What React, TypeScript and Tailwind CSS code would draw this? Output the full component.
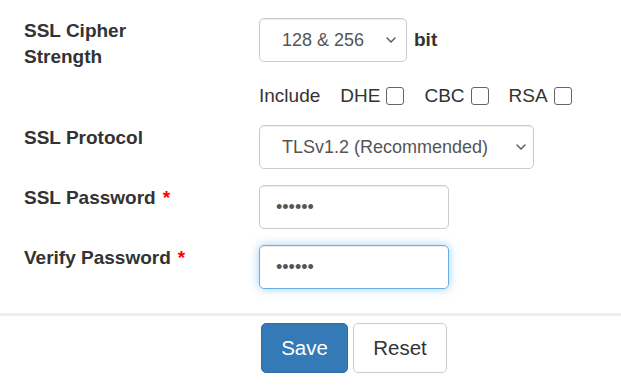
import { ChangeEvent, useState } from "react";

const font = "font-['Liberation_Sans',Arial,Helvetica,sans-serif]";

function Chevron({ className }: { className?: string }) {
  return (
    <svg
      viewBox="0 0 10 6"
      className={className}
      fill="none"
      stroke="#555"
      strokeWidth="1.4"
      strokeLinecap="round"
      strokeLinejoin="round"
    >
      <path d="M1 1l4 4 4-4" />
    </svg>
  );
}

interface SelectProps {
  value: string;
  options: string[];
  width: string;
  chevronRight: string;
  onChange: (v: string) => void;
}

function Select({ value, options, width, chevronRight, onChange }: SelectProps) {
  return (
    <div className={`relative h-[44px] ${width}`}>
      <select
        value={value}
        onChange={(e: ChangeEvent<HTMLSelectElement>) => onChange(e.target.value)}
        className={`h-full w-full appearance-none rounded-[5px] border border-[#cccccc] bg-white pl-[22px] text-[18px] text-[#555555] shadow-[inset_0_1px_1px_rgba(0,0,0,0.075)] outline-none ${font}`}
      >
        {options.map((o) => (
          <option key={o}>{o}</option>
        ))}
      </select>
      <Chevron
        className={`pointer-events-none absolute top-1/2 h-[6px] w-[10px] -translate-y-1/2 ${chevronRight}`}
      />
    </div>
  );
}

function Check({ label }: { label: string }) {
  return (
    <label className="flex items-center gap-[6px]">
      <span>{label}</span>
      <input
        type="checkbox"
        className="h-[18px] w-[18px] appearance-none rounded-[3px] border border-[#666666] bg-white"
      />
    </label>
  );
}

function Label({ text, required }: { text: string; required?: boolean }) {
  return (
    <div className="w-[259px] shrink-0 pl-[24px] pr-4 text-[19px] font-bold leading-[26px] text-[#333333]">
      {text}
      {required && <span className="ml-[7px] text-[#ff0000]">*</span>}
    </div>
  );
}

export default function App() {
  const [cipher, setCipher] = useState("128 & 256");
  const [protocol, setProtocol] = useState("TLSv1.2 (Recommended)");

  return (
    <div className={`h-[391px] w-[621px] overflow-hidden bg-white text-[#333333] ${font}`}>
      <div className="flex flex-col gap-[16px] pt-[18px]">
        {/* Cipher strength */}
        <div className="flex">
          <div className="w-[259px] shrink-0 pl-[24px] text-[19px] font-bold leading-[26px]">
            SSL Cipher
            <br />
            Strength
          </div>
          <div className="flex flex-col">
            <div className="flex items-center gap-[7px]">
              <Select
                value={cipher}
                options={["128 & 256", "256", "128"]}
                width="w-[148px]"
                chevronRight="right-[11px]"
                onChange={setCipher}
              />
              <span className="text-[19px] font-bold">bit</span>
            </div>
            <div className="mt-[21px] flex h-[26px] items-center gap-[20px] text-[19px] leading-[26px]">
              <span>Include</span>
              <Check label="DHE" />
              <Check label="CBC" />
              <Check label="RSA" />
            </div>
          </div>
        </div>

        {/* Protocol */}
        <div className="flex">
          <Label text="SSL Protocol" />
          <Select
            value={protocol}
            options={["TLSv1.2 (Recommended)", "TLSv1.1", "TLSv1.0"]}
            width="w-[275px]"
            chevronRight="right-[8px]"
            onChange={setProtocol}
          />
        </div>

        {/* Passwords */}
        <div className="flex">
          <Label text="SSL Password" required />
          <input
            type="password"
            defaultValue="123456"
            className={`h-[44px] w-[190px] rounded-[5px] border border-[#cccccc] px-[16px] text-[18px] text-[#555555] shadow-[inset_0_1px_1px_rgba(0,0,0,0.075)] outline-none ${font}`}
          />
        </div>
        <div className="flex">
          <Label text="Verify Password" required />
          <input
            type="password"
            defaultValue="123456"
            className={`h-[44px] w-[190px] rounded-[5px] border border-[#66afe9] px-[16px] text-[18px] text-[#555555] shadow-[inset_0_1px_1px_rgba(0,0,0,0.075),0_0_10px_rgba(102,175,233,0.6)] outline-none ${font}`}
          />
        </div>
      </div>

      <hr className="mt-[24px] border-t-[3px] border-[#eeeeee]" />

      <div className="flex gap-[5px] pl-[261px] pt-[7px]">
        <button className="h-[50px] w-[87px] rounded-[5px] border border-[#2e6da4] bg-[#337ab7] text-[20.5px] text-white">
          Save
        </button>
        <button className="h-[50px] w-[94px] rounded-[5px] border border-[#cccccc] bg-white text-[20.5px] text-[#333333]">
          Reset
        </button>
      </div>
    </div>
  );
}
